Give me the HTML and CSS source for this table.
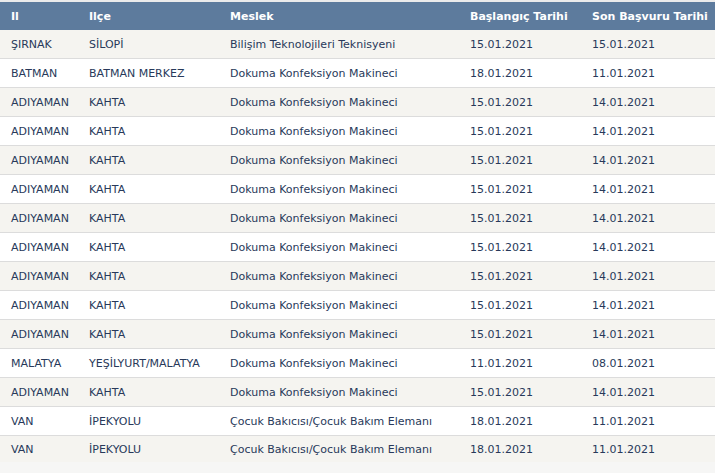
FILE: index.html
```html
<!DOCTYPE html>
<html lang="tr">
<head>
<meta charset="utf-8">
<link rel="stylesheet" href="styles.css">
</head>
<body>
<div class="page">
<table class="grid">
<colgroup><col class="c1"><col class="c2"><col class="c3"><col class="c4"><col class="c5"></colgroup>
<thead>
<tr><th>Il</th><th>Ilçe</th><th>Meslek</th><th>Başlangıç Tarihi</th><th>Son Başvuru Tarihi</th></tr>
</thead>
<tbody>
<tr><td>ŞIRNAK</td><td>SİLOPİ</td><td>Bilişim Teknolojileri Teknisyeni</td><td>15.01.2021</td><td>15.01.2021</td></tr>
<tr><td>BATMAN</td><td>BATMAN MERKEZ</td><td>Dokuma Konfeksiyon Makineci</td><td>18.01.2021</td><td>11.01.2021</td></tr>
<tr><td>ADIYAMAN</td><td>KAHTA</td><td>Dokuma Konfeksiyon Makineci</td><td>15.01.2021</td><td>14.01.2021</td></tr>
<tr><td>ADIYAMAN</td><td>KAHTA</td><td>Dokuma Konfeksiyon Makineci</td><td>15.01.2021</td><td>14.01.2021</td></tr>
<tr><td>ADIYAMAN</td><td>KAHTA</td><td>Dokuma Konfeksiyon Makineci</td><td>15.01.2021</td><td>14.01.2021</td></tr>
<tr><td>ADIYAMAN</td><td>KAHTA</td><td>Dokuma Konfeksiyon Makineci</td><td>15.01.2021</td><td>14.01.2021</td></tr>
<tr><td>ADIYAMAN</td><td>KAHTA</td><td>Dokuma Konfeksiyon Makineci</td><td>15.01.2021</td><td>14.01.2021</td></tr>
<tr><td>ADIYAMAN</td><td>KAHTA</td><td>Dokuma Konfeksiyon Makineci</td><td>15.01.2021</td><td>14.01.2021</td></tr>
<tr><td>ADIYAMAN</td><td>KAHTA</td><td>Dokuma Konfeksiyon Makineci</td><td>15.01.2021</td><td>14.01.2021</td></tr>
<tr><td>ADIYAMAN</td><td>KAHTA</td><td>Dokuma Konfeksiyon Makineci</td><td>15.01.2021</td><td>14.01.2021</td></tr>
<tr><td>ADIYAMAN</td><td>KAHTA</td><td>Dokuma Konfeksiyon Makineci</td><td>15.01.2021</td><td>14.01.2021</td></tr>
<tr><td>MALATYA</td><td>YEŞİLYURT/MALATYA</td><td>Dokuma Konfeksiyon Makineci</td><td>11.01.2021</td><td>08.01.2021</td></tr>
<tr><td>ADIYAMAN</td><td>KAHTA</td><td>Dokuma Konfeksiyon Makineci</td><td>15.01.2021</td><td>14.01.2021</td></tr>
<tr><td>VAN</td><td>İPEKYOLU</td><td>Çocuk Bakıcısı/Çocuk Bakım Elemanı</td><td>18.01.2021</td><td>11.01.2021</td></tr>
<tr><td>VAN</td><td>İPEKYOLU</td><td>Çocuk Bakıcısı/Çocuk Bakım Elemanı</td><td>18.01.2021</td><td>11.01.2021</td></tr>
</tbody>
</table>
</div>
</body>
</html>
```
FILE: styles.css
```css
html, body {
  margin: 0;
  padding: 0;
}
body {
  background: #f6f6f5;
  font-family: "DejaVu Sans", Verdana, sans-serif;
  font-size: 11px;
  color: #28395a;
}
.page {
  padding-top: 2px;
  background: linear-gradient(#ebebeb, #ebebeb) top / 100% 2px no-repeat;
}
.grid {
  width: 715px;
  border-collapse: collapse;
  table-layout: fixed;
}
.c1 { width: 78px; }
.c2 { width: 141px; }
.c3 { width: 240px; }
.c4 { width: 122px; }
.c5 { width: 134px; }
.grid th {
  background: #5d7b9d;
  color: #ffffff;
  font-weight: bold;
  text-align: left;
  height: 28px;
  padding: 0 0 0 11px;
  white-space: nowrap;
}
.grid td {
  height: 28px;
  padding: 0 0 0 11px;
  border-bottom: 1px solid #dcdcdc;
  white-space: nowrap;
  background: #ffffff;
}
.grid tbody tr:nth-child(odd) td {
  background: #f5f4f0;
}
.grid tbody tr:last-child td {
  border-bottom: none;
  height: 26px;
}
```
